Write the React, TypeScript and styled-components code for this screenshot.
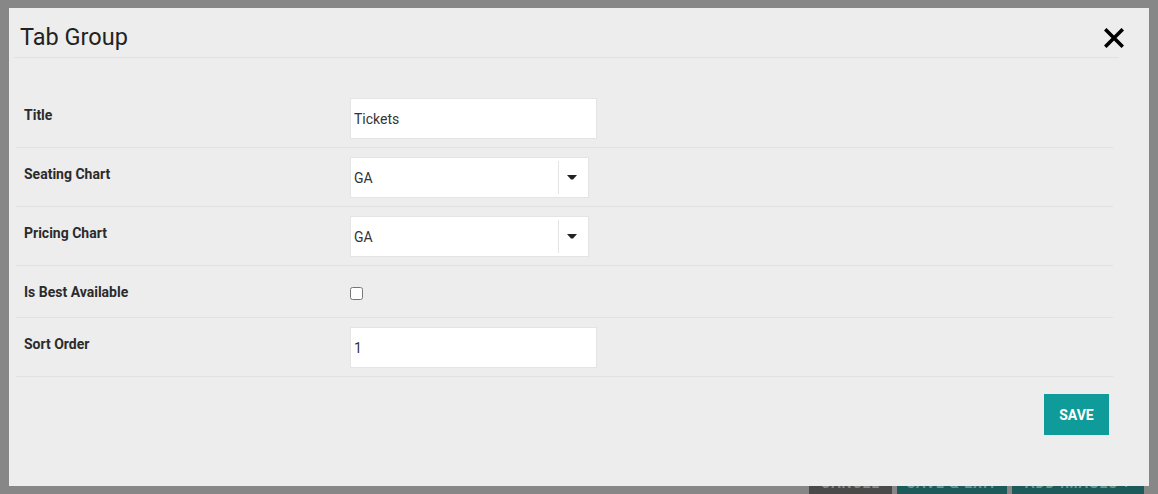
import styled, { createGlobalStyle } from 'styled-components'

const GlobalStyle = createGlobalStyle`
  html, body {
    margin: 0;
    padding: 0;
  }
  body {
    font-family: Roboto, "Liberation Sans", sans-serif;
    overflow: hidden;
  }
`

type Field =
  | { kind: 'text'; label: string; value: string }
  | { kind: 'select'; label: string; value: string }
  | { kind: 'checkbox'; label: string; checked: boolean }

const fields: Field[] = [
  { kind: 'text', label: 'Title', value: 'Tickets' },
  { kind: 'select', label: 'Seating Chart', value: 'GA' },
  { kind: 'select', label: 'Pricing Chart', value: 'GA' },
  { kind: 'checkbox', label: 'Is Best Available', checked: false },
  { kind: 'text', label: 'Sort Order', value: '1' },
]

// buttons of the page behind the dialog, mostly hidden by it
const backButtons = [
  { text: 'CANCEL', tone: 'gray' as const, width: 83 },
  { text: 'SAVE & EXIT', tone: 'teal' as const, width: 110 },
  { text: 'ADD IMAGES +', tone: 'teal' as const, width: 132 },
]

function CloseIcon() {
  return (
    <svg width="20" height="20" viewBox="0 0 20 20">
      <path d="M2.5 2.5 L17.5 17.5 M17.5 2.5 L2.5 17.5" stroke="#000" strokeWidth="3.6" strokeLinecap="square" />
    </svg>
  )
}

function SelectBox({ value }: { value: string }) {
  return (
    <Select>
      <SelectValue>{value}</SelectValue>
      <SelectArrow>
        <svg width="10" height="5" viewBox="0 0 10 5">
          <path d="M0 0 L10 0 L6 4.5 L4 4.5 Z" fill="#222" />
        </svg>
      </SelectArrow>
    </Select>
  )
}

export default function App() {
  return (
    <>
      <GlobalStyle />
      <Page>
        <PageFooter>
          {backButtons.map((b) => (
            <BackButton key={b.text} $tone={b.tone} style={{ width: b.width }}>
              {b.text}
            </BackButton>
          ))}
        </PageFooter>

        <Modal>
          <Header>
            <Title>Tab Group</Title>
            <CloseButton type="button" aria-label="Close">
              <CloseIcon />
            </CloseButton>
          </Header>
          <Body>
            {fields.map((f) => (
              <Row key={f.label}>
                <Label>{f.label}</Label>
                {f.kind === 'text' && <TextInput defaultValue={f.value} />}
                {f.kind === 'select' && <SelectBox value={f.value} />}
                {f.kind === 'checkbox' && (
                  <CheckCell>
                    <Checkbox type="checkbox" defaultChecked={f.checked} />
                  </CheckCell>
                )}
              </Row>
            ))}
          </Body>
          <Actions>
            <SaveButton type="button">Save</SaveButton>
          </Actions>
        </Modal>
      </Page>
    </>
  )
}

const Page = styled.div`
  position: relative;
  height: 494px;
  background: #878787;
  overflow: hidden;
  display: flex;
  flex-direction: column;
`

const PageFooter = styled.div`
  margin-top: auto;
  margin-bottom: -9px;
  padding-right: 14px;
  display: flex;
  justify-content: flex-end;
  gap: 5px;
`

const BackButton = styled.div<{ $tone: 'gray' | 'teal' }>`
  box-sizing: border-box;
  height: 40px;
  display: flex;
  align-items: center;
  justify-content: center;
  font-size: 14px;
  font-weight: 700;
  letter-spacing: 1px;
  white-space: nowrap;
  background: ${(p) => (p.$tone === 'gray' ? '#4a4a4a' : '#1d5a5a')};
  color: ${(p) => (p.$tone === 'gray' ? '#8a8a8a' : '#6f9696')};
`

const Modal = styled.div`
  position: absolute;
  top: 8px;
  left: 9px;
  width: 1140px;
  height: 478px;
  background: #ededed;
  display: flex;
  flex-direction: column;
`

const Header = styled.div`
  display: flex;
  justify-content: space-between;
  align-items: flex-start;
  margin: 0 30px 0 5px;
  padding: 15px 0 6px 6px;
  border-bottom: 1px solid #e1e1e1;
`

const Title = styled.h2`
  margin: 0;
  font-size: 23.5px;
  line-height: 28px;
  font-weight: 400;
  color: #222;
`

const CloseButton = styled.button`
  margin: 5px -5px 0 0;
  padding: 0;
  border: 0;
  background: none;
  width: 20px;
  height: 20px;
  cursor: pointer;
  display: flex;
`

const Body = styled.div`
  padding: 31px 36px 0 7px;
`

const Row = styled.div`
  display: grid;
  grid-template-columns: 326px 1fr;
  align-items: start;
  padding: 9px 0 8px 8px;
  border-bottom: 1px solid #e1e1e1;
`

const Label = styled.label`
  padding-top: 7px;
  font-size: 14px;
  line-height: 20px;
  font-weight: 700;
  color: #2b2b2b;
`

const TextInput = styled.input`
  box-sizing: border-box;
  width: 247px;
  height: 41px;
  margin: 0;
  padding: 0 3px;
  border: 1px solid #e4e4e4;
  background: #fff;
  font-family: inherit;
  font-size: 14px;
  color: #333;
  outline: none;
`

const Select = styled.div`
  box-sizing: border-box;
  width: 239px;
  height: 41px;
  border: 1px solid #e4e4e4;
  background: #fff;
  display: flex;
  align-items: stretch;
`

const SelectValue = styled.span`
  flex: 1;
  display: flex;
  align-items: center;
  padding-left: 3px;
  font-size: 14px;
  color: #333;
`

const SelectArrow = styled.span`
  box-sizing: border-box;
  width: 30px;
  margin: 3px 0;
  padding-right: 4px;
  border-left: 1px solid #e4e4e4;
  display: flex;
  align-items: center;
  justify-content: center;
`

const CheckCell = styled.div`
  height: 34px;
`

const Checkbox = styled.input`
  margin: 12px 0 0 0;
  width: 13px;
  height: 13px;
`

const Actions = styled.div`
  display: flex;
  justify-content: flex-end;
  padding: 17px 40px 0 0;
`

const SaveButton = styled.button`
  width: 65px;
  height: 41px;
  border: 0;
  background: #0e9b99;
  color: #fff;
  font-family: inherit;
  font-size: 14px;
  font-weight: 700;
  text-transform: uppercase;
  cursor: pointer;
`
